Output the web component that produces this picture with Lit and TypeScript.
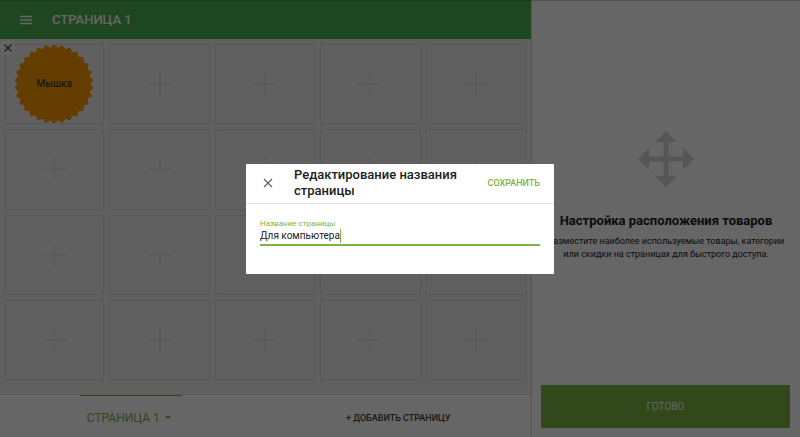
import { LitElement, html, css, svg } from "lit";
import { customElement, property } from "lit/decorators.js";

const burst = (spikes: number, outer: number, inner: number) =>
  Array.from({ length: spikes * 2 }, (_, i) => {
    const r = i % 2 ? inner : outer;
    const a = (i * Math.PI) / spikes - Math.PI / 2;
    return `${(40 + r * Math.cos(a)).toFixed(2)},${(40 + r * Math.sin(a)).toFixed(2)}`;
  }).join(" ");

const cross = svg`<path d="M2.500 2.500 L9.500 9.500 M9.500 2.500 L2.500 9.500" fill="none" stroke="currentColor" stroke-width="1.3"/>`;

@customElement("product-cell")
class ProductCell extends LitElement {
  @property() label = "";

  static styles = css`
    :host { display: grid; position: relative; min-width: 0; min-height: 0; }
    .cell {
      display: grid; place-items: center; min-height: 0; padding: 0;
      border: 1px solid #dadada; border-radius: 2px; background: #f0f0f0;
      font: 400 10px/12px Roboto, sans-serif; color: #212121;
    }
    .cell > * { grid-area: 1 / 1; }
    .plus { width: 26px; height: 26px; }
    .burst { width: 80px; height: 80px; margin: -1px 0; }
    .remove {
      position: absolute; left: -4px; top: -4px; width: 15px; height: 15px;
      display: grid; place-items: center; padding: 0; border: 0; border-radius: 50%;
      background: #fff; color: #424242;
    }
    .remove svg { width: 12px; height: 12px; }
  `;

  render() {
    if (!this.label) {
      return html`<button class="cell" aria-label="Добавить товар">
        <svg class="plus" viewBox="0 0 26 26"><path d="M13 1V25M1 13H25" stroke="#dadada" stroke-width="1"/></svg>
      </button>`;
    }
    return html`<button class="cell">
        <svg class="burst" viewBox="0 0 80 80"><polygon points=${burst(30, 39.3, 36)} fill="#ff9800" stroke="#ff9800" stroke-linejoin="round"/></svg>
        <span>${this.label}</span>
      </button>
      <button class="remove" aria-label="Удалить"><svg viewBox="0 0 12 12">${cross}</svg></button>`;
  }
}

@customElement("rename-dialog")
class RenameDialog extends LitElement {
  @property() value = "";

  static styles = css`
    :host {
      position: fixed; inset: 0; display: grid; place-items: center;
      background: rgba(0, 0, 0, 0.6); font-family: Roboto, sans-serif;
    }
    .dialog { width: 308px; background: #fff; color: #212121; }
    .head {
      display: flex; align-items: center; height: 39px; padding: 0 14px;
      border-bottom: 1px solid #e0e0e0;
    }
    .close { display: grid; width: 16px; padding: 0; border: 0; background: none; color: #616161; }
    .close svg { width: 16px; height: 16px; }
    h2 { flex: 1; margin: 0 0 0 18px; font-size: 13px; line-height: 16px; font-weight: 500; }
    .save { padding: 0; border: 0; background: none; font: 500 9px/16px Roboto, sans-serif; color: #7cb342; }
    .body { padding: 15px 14px 28px; }
    label { display: block; font-size: 8px; line-height: 9px; color: #7cb342; }
    .line { display: flex; align-items: center; height: 16px; border-bottom: 2px solid #7cb342; }
    input {
      field-sizing: content; padding: 0; border: 0; outline: 0; background: none;
      font: 400 10px/16px Roboto, sans-serif; color: #212121;
    }
    .caret { width: 1px; height: 14px; background: #7cb342; }
  `;

  render() {
    return html`<section class="dialog" role="dialog" aria-labelledby="title">
      <header class="head">
        <button class="close" aria-label="Закрыть"><svg viewBox="0 0 12 12"><path d="M3 3L9 9M9 3L3 9" stroke="currentColor" stroke-width="0.9"/></svg></button>
        <h2 id="title">Редактирование названия страницы</h2>
        <button class="save">СОХРАНИТЬ</button>
      </header>
      <div class="body">
        <label for="name">Название страницы</label>
        <div class="line"><input id="name" .value=${this.value} /><span class="caret"></span></div>
      </div>
    </section>`;
  }
}

@customElement("app-root")
class AppRoot extends LitElement {
  static styles = css`
    :host {
      display: grid; grid-template-columns: minmax(0, 1fr) 269px; min-height: 100vh;
      background: #fff; font-family: Roboto, sans-serif; color: #212121;
    }
    .main { display: flex; flex-direction: column; background: #f0f0f0; }
    .top {
      display: flex; align-items: center; gap: 20px; height: 38px; padding: 0 20px;
      border-top: 1px solid #388e3c; background: #4caf50; color: #fff;
    }
    .menu { display: grid; padding: 0; border: 0; background: none; color: inherit; }
    .menu svg { width: 12px; height: 10px; }
    h1 { margin: 0; font-size: 13px; line-height: 18px; font-weight: 500; }
    .grid {
      flex: 1; display: grid; gap: 5px; padding: 5px 5px 14px 4px;
      grid-template-columns: repeat(5, minmax(0, 1fr)); grid-template-rows: repeat(4, minmax(80px, 1fr));
    }
    .tabs {
      display: grid; grid-template-columns: 1fr 1fr; height: 42px;
      border-top: 1px solid #e0e0e0; background: #fff;
    }
    .tabs button {
      display: flex; align-items: center; justify-content: center; gap: 5px;
      padding: 3px 0 0; border: 0; background: none; color: #424242;
      font: 500 9px/16px Roboto, sans-serif;
    }
    .tabs .current {
      width: 102px; margin-right: 4px; padding: 2px 4px 0 0; justify-self: center;
      border-top: 1px solid #6abf2a; font-weight: 400; font-size: 12px; color: #7cb342;
    }
    .arrow { width: 6px; height: 3px; }
    .side {
      display: flex; flex-direction: column; border-left: 1px solid #dadada;
      border-top: 1px solid #a5d6a7; background: #fff;
    }
    .hint {
      flex: 1; display: flex; flex-direction: column; align-items: center;
      justify-content: center; text-align: center; padding: 5px 10px 0;
    }
    .move { width: 56px; height: 56px; }
    h2 { margin: 25px 0 5px; font-size: 13px; line-height: 18px; font-weight: 700; }
    p { margin: 0; font-size: 9px; line-height: 13px; }
    .done {
      height: 43px; margin: 0 10px 9px 9px; padding: 0; border: 0; border-radius: 1px;
      background: #7cb342; color: #fff; font: 400 10px/16px Roboto, sans-serif;
    }
  `;

  render() {
    const cells = ["Мышка", ...Array(19).fill("")];
    return html`
      <main class="main">
        <header class="top">
          <button class="menu" aria-label="Меню"><svg viewBox="0 0 12 10"><path d="M0 1.500H12M0 5H12M0 8.500H12" stroke="currentColor" stroke-width="1.3"/></svg></button>
          <h1>СТРАНИЦА 1</h1>
        </header>
        <div class="grid">${cells.map((label) => html`<product-cell .label=${label}></product-cell>`)}</div>
        <nav class="tabs">
          <button class="current">СТРАНИЦА 1 <svg class="arrow" viewBox="0 0 6 3"><path d="M0 0H6L3 3Z" fill="currentColor"/></svg></button>
          <button>+ ДОБАВИТЬ СТРАНИЦУ</button>
        </nav>
      </main>
      <aside class="side">
        <div class="hint">
          <svg class="move" viewBox="0 0 56 56"><path fill="#d8d8d8" d="M28 0L39 11H30.500V25.500H45V17L56 28L45 39V30.500H30.500V45H39L28 56L17 45H25.500V30.500H11V39L0 28L11 17V25.500H25.500V11H17Z"/></svg>
          <h2>Настройка расположения товаров</h2>
          <p>Разместите наиболее используемые товары, категории или скидки на страницах для быстрого доступа.</p>
        </div>
        <button class="done">ГОТОВО</button>
      </aside>
      <rename-dialog value="Для компьютера"></rename-dialog>`;
  }
}
